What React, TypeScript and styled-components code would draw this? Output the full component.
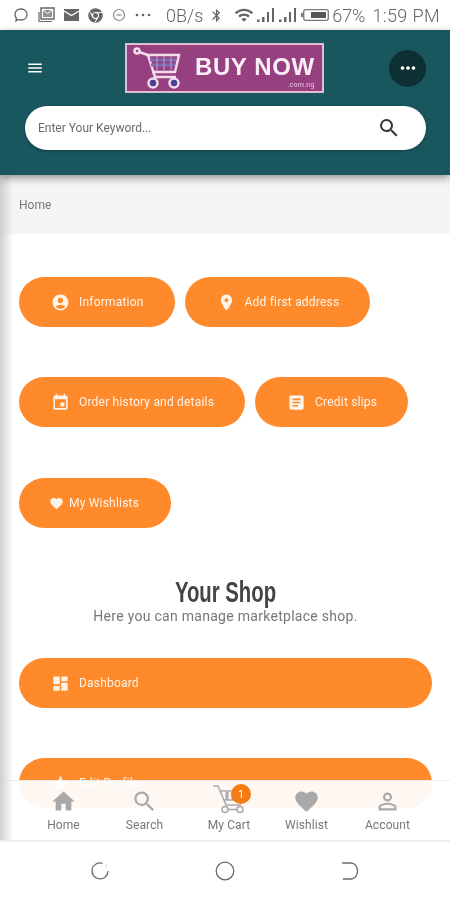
import styled, { createGlobalStyle } from 'styled-components';
import {
  MdAccountCircle,
  MdArticle,
  MdBluetooth,
  MdDashboard,
  MdEvent,
  MdFavorite,
  MdHome,
  MdMenu,
  MdMoreHoriz,
  MdPersonOutline,
  MdPlace,
  MdSearch,
  MdStar,
  MdWifi,
} from 'react-icons/md';
import { FaChrome } from 'react-icons/fa';

const GlobalStyle = createGlobalStyle`
  html, body {
    margin: 0;
    padding: 0;
    background: #fff;
  }
  * {
    box-sizing: border-box;
  }
`;

const Screen = styled.div`
  width: 450px;
  height: 900px;
  display: flex;
  flex-direction: column;
  overflow: hidden;
  background: #fff;
  font-family: Roboto, 'Liberation Sans', sans-serif;
  filter: blur(0.5px);
`;

const StatusBar = styled.div`
  height: 30px;
  flex: none;
  display: flex;
  align-items: center;
  padding: 0 10px 0 13px;
  color: #666;
  font-size: 18px;
  font-weight: 300;
`;

const StatusIcons = styled.div`
  display: flex;
  align-items: center;
  gap: 9px;
  width: 153px;
`;

const Speed = styled.span`
  margin-right: 6px;
`;

const SignalGroup = styled.div`
  display: flex;
  align-items: center;
  margin-left: auto;
  gap: 3px;
`;

const Percent = styled.span`
  margin-left: 3px;
`;

const Clock = styled.span`
  margin-left: 7px;
  letter-spacing: 0.4px;
  white-space: nowrap;
`;

const Header = styled.header`
  height: 145px;
  flex: none;
  padding: 13px 24px 0 25px;
  background: #17575d;
  box-shadow: 0 3px 8px rgba(0, 0, 0, 0.4);
  position: relative;
  z-index: 3;
`;

const TopRow = styled.div`
  display: grid;
  grid-template-columns: 1fr auto 1fr;
  align-items: center;
  height: 50px;
  color: #fff;
`;

const MenuIcon = styled(MdMenu)`
  margin-left: 1px;
`;

const Logo = styled.div`
  width: 199px;
  height: 50px;
  margin-right: 2px;
  display: flex;
  align-items: center;
  padding-left: 6px;
  background: #97407f;
  border: 2px solid #e3bcd8;
`;

const LogoText = styled.div`
  margin: 6px 0 0 12px;
  display: flex;
  flex-direction: column;
  align-items: flex-end;
  color: #fbeef7;
  font-family: 'Liberation Sans', sans-serif;
  font-weight: 700;
  font-size: 24px;
  line-height: 28px;
  letter-spacing: 0.6px;
  white-space: nowrap;
`;

const LogoDomain = styled.span`
  font-family: Roboto, sans-serif;
  font-weight: 400;
  font-size: 7px;
  line-height: 8px;
  letter-spacing: 0.3px;
  color: #e9c8df;
`;

const MoreButton = styled.div`
  justify-self: end;
  width: 37px;
  height: 37px;
  border-radius: 50%;
  display: flex;
  align-items: center;
  justify-content: center;
  background: #0e2f33;
`;

const SearchBar = styled.div`
  height: 44px;
  margin-top: 13px;
  padding: 0 25px 0 13px;
  display: flex;
  align-items: center;
  justify-content: space-between;
  background: #fff;
  border-radius: 22px;
  box-shadow: 0 1px 3px rgba(0, 0, 0, 0.3);
  color: #6a6a6a;
  font-size: 12px;
`;

const Main = styled.main`
  flex: 1;
  position: relative;
  overflow: hidden;
  border-bottom: 2px solid #efefef;

  &::before {
    content: '';
    position: absolute;
    top: 0;
    bottom: 0;
    left: 0;
    width: 13px;
    z-index: 2;
    background: linear-gradient(to right, #cfcfcf, rgba(255, 255, 255, 0));
  }
`;

const Breadcrumb = styled.div`
  height: 59px;
  padding: 1px 19px 0;
  display: flex;
  align-items: center;
  background: #f5f5f5;
  color: #777;
  font-size: 12px;
`;

const Content = styled.div`
  padding: 43px 18px 0 19px;
  display: flex;
  flex-direction: column;
  gap: 50px;
`;

const ButtonRow = styled.div<{ $nudge?: number }>`
  display: flex;
  gap: 10px;
  margin-top: ${(p) => p.$nudge ?? 0}px;
`;

const PillButton = styled.div<{ $wide?: boolean; $tight?: boolean }>`
  height: 50px;
  flex: ${(p) => (p.$wide ? 1 : 'none')};
  display: flex;
  align-items: center;
  gap: ${(p) => (p.$tight ? 5 : 9)}px;
  padding: 0 ${(p) => (p.$tight ? 32 : 31)}px 0 ${(p) => (p.$tight ? 30 : 32)}px;
  border-radius: 25px;
  background: #ff8a2b;
  color: #fdf3e8;
  font-size: 12px;
  letter-spacing: 0.2px;
  white-space: nowrap;
`;

const ShopHeading = styled.div`
  margin: -2px 0 -17px;
  text-align: center;
  color: #777;
  font-size: 14px;
  letter-spacing: 0.28px;
  line-height: 17px;
`;

const ShopTitle = styled.div`
  color: #444;
  font-family: 'Liberation Sans', sans-serif;
  font-size: 29px;
  font-weight: 700;
  line-height: 32px;
  letter-spacing: 0;
  transform: scaleX(0.7);
`;

const BottomNav = styled.nav`
  position: absolute;
  left: 0;
  right: 0;
  bottom: 0;
  height: 60px;
  z-index: 1;
  display: grid;
  grid-template-columns: repeat(5, 81px);
  padding: 7px 0 0 23px;
  background: rgba(255, 255, 255, 0.94);
  border-top: 1px solid #ececec;
`;

const NavItem = styled.div<{ $offset?: number }>`
  position: relative;
  display: flex;
  flex-direction: column;
  align-items: center;
  padding-left: ${(p) => p.$offset ?? 0}px;
  color: #a9a9a9;
`;

const NavLabel = styled.span`
  margin-top: 3px;
  color: #777;
  font-size: 12px;
  letter-spacing: 0.1px;
  line-height: 14px;
`;

const CartBadge = styled.span`
  position: absolute;
  top: -4px;
  left: 46px;
  width: 20px;
  height: 20px;
  border-radius: 50%;
  display: flex;
  align-items: center;
  justify-content: center;
  background: #f57c14;
  color: #fff;
  font-size: 11px;
`;

const SystemNav = styled.div`
  height: 58px;
  flex: none;
  display: grid;
  grid-template-columns: repeat(3, 125px);
  justify-content: center;
  align-items: center;
  justify-items: center;
  color: #6a6a6a;
`;

const CartDrawing = styled.svg`
  margin: -4px 0 1px;
`;

function ChatIcon() {
  return (
    <svg width="16" height="16" viewBox="0 0 16 16" fill="none" stroke="currentColor" strokeWidth="1.3">
      <path d="M8 2c3.600 0 6 2.300 6 5.500S11.600 13 8 13c-1 0-2-.2-2.800-.5L3 14l.4-2.800C2.500 10.200 2 9 2 7.500 2 4.300 4.400 2 8 2z" />
    </svg>
  );
}

function GalleryMailIcon() {
  return (
    <svg width="17" height="16" viewBox="0 0 17 16" fill="currentColor">
      <path d="M3 1h13v11H3z" fill="none" stroke="currentColor" strokeWidth="1.4" />
      <path d="M5 3h9v7H5z" opacity=".7" />
      <path d="M5 3l4.500 3.500L14 3" fill="none" stroke="#fff" strokeWidth="1" />
      <path d="M1 5v9.500h13" fill="none" stroke="currentColor" strokeWidth="1.2" />
    </svg>
  );
}

function EnvelopeIcon() {
  return (
    <svg width="15" height="12" viewBox="0 0 15 12">
      <path d="M0 0h15v12H0z" fill="currentColor" />
      <path d="M0 2l7.500 4.500L15 2" fill="none" stroke="#fff" strokeWidth="1.3" />
    </svg>
  );
}

function MinusCircleIcon() {
  return (
    <svg width="14" height="14" viewBox="0 0 14 14" fill="none" stroke="#8a8a8a" strokeWidth="1.200">
      <circle cx="7" cy="7" r="5.500" />
      <path d="M4.500 7h5" />
    </svg>
  );
}

function DotsIcon() {
  return (
    <svg width="16" height="4" viewBox="0 0 16 4" fill="currentColor">
      <circle cx="2" cy="2" r="1.300" />
      <circle cx="8" cy="2" r="1.300" />
      <circle cx="14" cy="2" r="1.300" />
    </svg>
  );
}

function SignalIcon() {
  return (
    <svg width="19" height="14" viewBox="0 0 19 14" fill="currentColor">
      <path d="M0 11.500h2.500V14H0zM5 9h2.500v5H5zM10 4h2v10h-2zM15 0h2v14h-2z" />
    </svg>
  );
}

function BatteryIcon() {
  return (
    <svg width="28" height="12" viewBox="0 0 28 12">
      <path d="M0 4h2v4H0z" fill="#777" />
      <rect x="2.700" y=".7" width="24.600" height="10.600" rx="2" fill="none" stroke="#777" strokeWidth="1.300" />
      <path d="M10 3h15v6H10z" fill="#555" />
    </svg>
  );
}

function LogoCart() {
  return (
    <svg width="50" height="42" viewBox="0 0 50 42" fill="none" stroke="#f3dcec" strokeWidth="2.500">
      <circle cx="4" cy="4" r="2.500" />
      <path d="M6 5l9 3 7 22h21" />
      <path d="M13 8h33l-4 17H19" />
      <path d="M17 13h26M18 18h24" stroke="#7c6db0" strokeWidth="3" />
      <path d="M24 9v15M31 9v15M38 9v15" stroke="#b583c0" strokeWidth="1.500" />
      <circle cx="20" cy="36" r="4.500" fill="#4c3f96" />
      <circle cx="41" cy="36" r="4.500" fill="#4c3f96" />
    </svg>
  );
}

function NavCart() {
  return (
    <CartDrawing width="34" height="30" viewBox="0 0 34 30" fill="none" stroke="#ababab" strokeWidth="1.600">
      <path d="M1 2h5l8 19h15" />
      <path d="M8 7h22l-3 9H12" />
      <path d="M15 8v8M21 8v8" strokeWidth="3" />
      <circle cx="13" cy="25.500" r="3" />
      <circle cx="28" cy="25.500" r="3" />
      <path d="M16 25.500h9" />
    </CartDrawing>
  );
}

function RecentsIcon() {
  return (
    <svg width="20" height="20" viewBox="0 0 20 20" fill="none" stroke="currentColor" strokeWidth="1.300">
      <path d="M12.500 2.300A8 8 0 1 0 18 10" />
      <path d="M16 4.500l.4.400" />
    </svg>
  );
}

function HomeRingIcon() {
  return (
    <svg width="20" height="20" viewBox="0 0 20 20" fill="none" stroke="currentColor" strokeWidth="1.300">
      <circle cx="10" cy="10" r="8.800" />
    </svg>
  );
}

function BackIcon() {
  return (
    <svg width="18" height="20" viewBox="0 0 18 20" fill="none" stroke="currentColor" strokeWidth="1.300">
      <path d="M1 1.500l1 .5h8c4 0 6.500 3.500 6.500 8s-2.500 8-6.500 8H2" />
    </svg>
  );
}

const buttonRows = [
  [
    { label: 'Information', icon: <MdAccountCircle size={19} /> },
    { label: 'Add first address', icon: <MdPlace size={19} /> },
  ],
  [
    { label: 'Order history and details', icon: <MdEvent size={19} /> },
    { label: 'Credit slips', icon: <MdArticle size={19} /> },
  ],
];

export default function App() {
  return (
    <Screen>
      <GlobalStyle />
      <StatusBar>
        <StatusIcons>
          <ChatIcon />
          <GalleryMailIcon />
          <EnvelopeIcon />
          <FaChrome size={15} />
          <MinusCircleIcon />
          <DotsIcon />
        </StatusIcons>
        <Speed>0B/s</Speed>
        <MdBluetooth size={15} />
        <SignalGroup>
          <MdWifi size={20} />
          <SignalIcon />
          <SignalIcon />
          <BatteryIcon />
        </SignalGroup>
        <Percent>67%</Percent>
        <Clock>1:59 PM</Clock>
      </StatusBar>

      <Header>
        <TopRow>
          <MenuIcon size={18} />
          <Logo>
            <LogoCart />
            <LogoText>
              BUY NOW
              <LogoDomain>.com.ng</LogoDomain>
            </LogoText>
          </Logo>
          <MoreButton>
            <MdMoreHoriz size={22} />
          </MoreButton>
        </TopRow>
        <SearchBar>
          Enter Your Keyword...
          <MdSearch size={24} color="#333" />
        </SearchBar>
      </Header>

      <Main>
        <Breadcrumb>Home</Breadcrumb>
        <Content>
          {buttonRows.map((row) => (
            <ButtonRow key={row[0].label}>
              {row.map((item) => (
                <PillButton key={item.label}>
                  {item.icon}
                  {item.label}
                </PillButton>
              ))}
            </ButtonRow>
          ))}
          <ButtonRow $nudge={1}>
            <PillButton $tight>
              <MdFavorite size={15} />
              My Wishlists
            </PillButton>
          </ButtonRow>
          <ShopHeading>
            <ShopTitle>Your Shop</ShopTitle>
            Here you can manage marketplace shop.
          </ShopHeading>
          <ButtonRow>
            <PillButton $wide>
              <MdDashboard size={19} />
              Dashboard
            </PillButton>
          </ButtonRow>
          <ButtonRow>
            <PillButton $wide>
              <MdStar size={19} />
              Edit Profile
            </PillButton>
          </ButtonRow>
        </Content>
        <BottomNav>
          <NavItem>
            <MdHome size={27} />
            <NavLabel>Home</NavLabel>
          </NavItem>
          <NavItem>
            <MdSearch size={27} />
            <NavLabel>Search</NavLabel>
          </NavItem>
          <NavItem $offset={7}>
            <NavCart />
            <CartBadge>1</CartBadge>
            <NavLabel>My Cart</NavLabel>
          </NavItem>
          <NavItem>
            <MdFavorite size={27} />
            <NavLabel>Wishlist</NavLabel>
          </NavItem>
          <NavItem>
            <MdPersonOutline size={27} />
            <NavLabel>Account</NavLabel>
          </NavItem>
        </BottomNav>
      </Main>

      <SystemNav>
        <RecentsIcon />
        <HomeRingIcon />
        <BackIcon />
      </SystemNav>
    </Screen>
  );
}
